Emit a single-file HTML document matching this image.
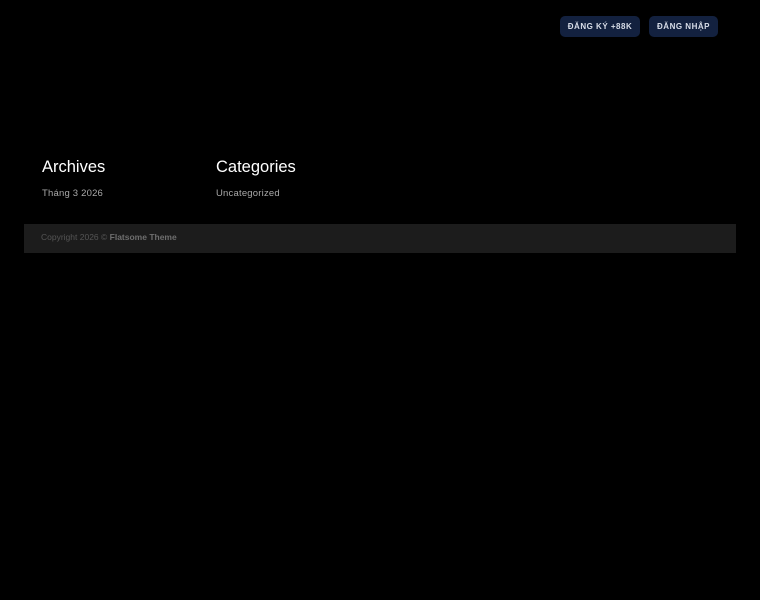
<!DOCTYPE html>
<html><head><meta charset="utf-8"><style>
html,body{margin:0;padding:0;background:#000;width:760px;height:600px;overflow:hidden;font-family:"Liberation Sans",sans-serif}
.btn{position:absolute;top:16px;height:21px;background:#13213f;border-radius:5px;color:#d8dde8;font-size:8px;font-weight:bold;letter-spacing:.5px;line-height:21px;text-align:center}
h3{position:absolute;margin:0;color:#fff;font-weight:normal;font-size:16.5px;top:158px}
.l{position:absolute;top:188px;color:#a8a8a8;font-size:9.5px;letter-spacing:.2px}
.foot{position:absolute;left:24px;top:224px;width:712px;height:29px;background:#1c1c1c}
.foot span{position:absolute;left:17px;top:8px;font-size:8.5px;color:#555}
.foot b{color:#6e6e6e}
</style></head><body>
<div class="btn" style="left:560px;width:80px">ĐĂNG KÝ +88K</div>
<div class="btn" style="left:649px;width:69px">ĐĂNG NHẬP</div>
<h3 style="left:42px">Archives</h3>
<h3 style="left:216px">Categories</h3>
<div class="l" style="left:42px">Tháng 3 2026</div>
<div class="l" style="left:216px">Uncategorized</div>
<div class="foot"><span>Copyright 2026 © <b>Flatsome Theme</b></span></div>
</body></html>
